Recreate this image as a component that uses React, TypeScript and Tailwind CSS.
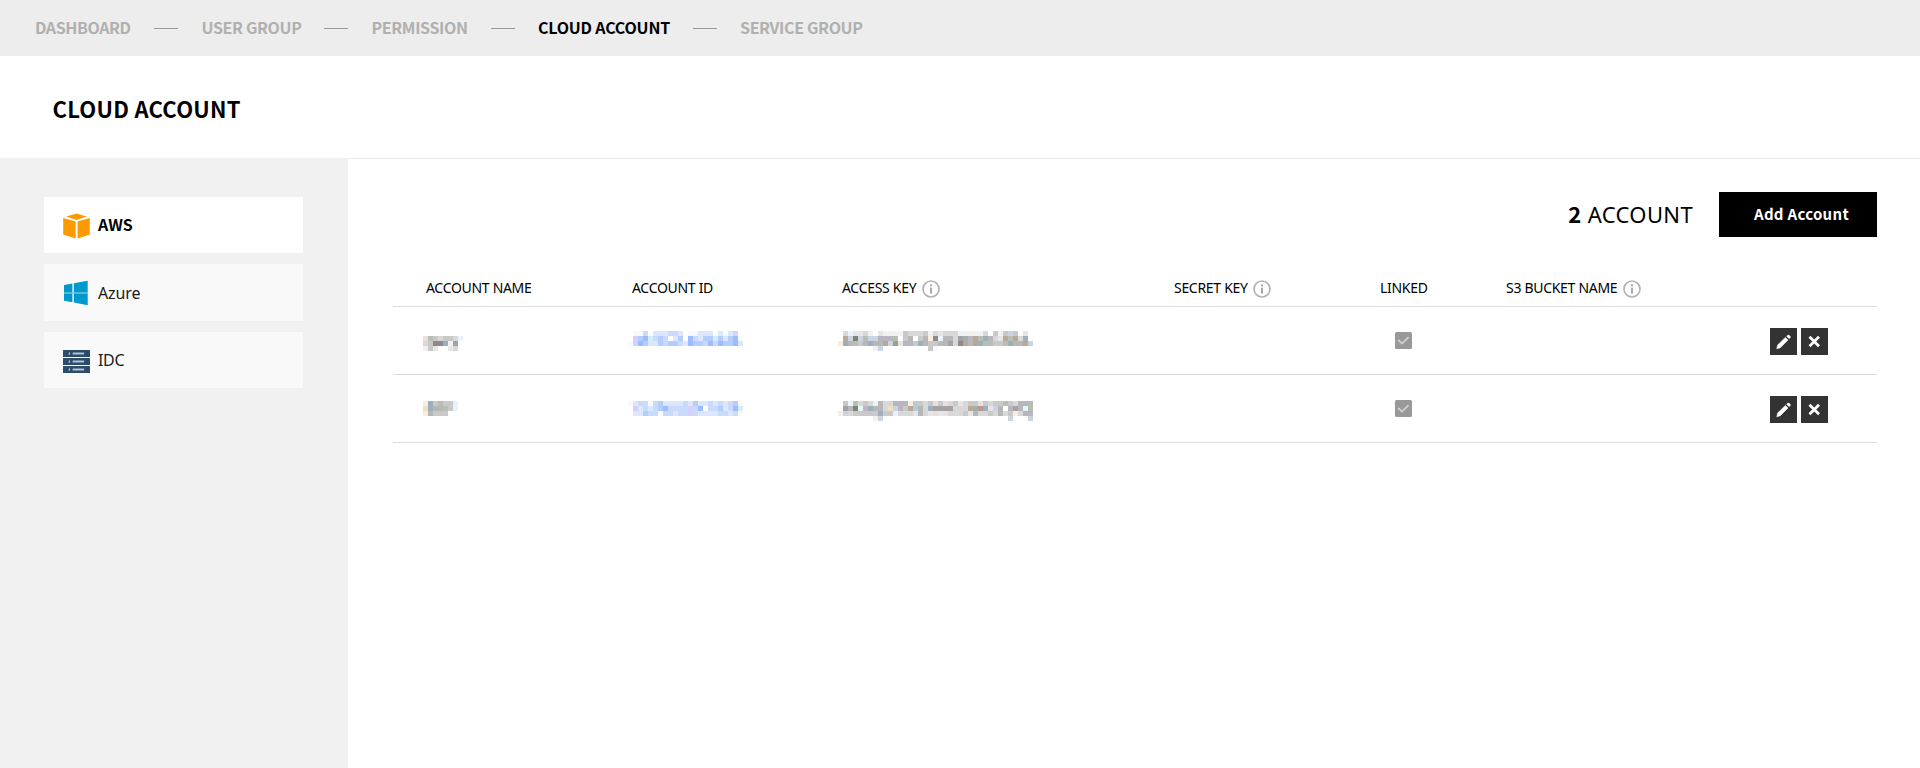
import React from "react";

const CJK = "font-['Noto_Sans_CJK_KR','Noto_Sans',sans-serif]";

const PALETTE: Record<string, string> = {
  p: "#f3f1f0", a: "#e6e6e6", k: "#d8d8d9", b: "#c9c9c9", c: "#b7b7ba", d: "#a3a1a4", e: "#8f8789",
  f: "#7f836f", g: "#b8a896", h: "#9fafba", i: "#e8f4fa", j: "#f8eddf", l: "#b6beb6", m: "#bab5c6",
  n: "#cbd5e2", o: "#ecdedb", q: "#efdfc6", r: "#b59a92", s: "#b4ccd3", t: "#9ca08e",
  "1": "#f8f8ff", "2": "#dce6fe", "3": "#c9dafd", "4": "#b3cdfd", "5": "#9cbdfd", "6": "#d6eafe", "7": "#d3d1fb",
};

function Mosaic({ rows }: { rows: string[] }) {
  const width = Math.max(...rows.map((r) => r.length)) * 5;
  const height = rows.length * 5;
  return (
    <svg width={width} height={height} viewBox={`0 0 ${width} ${height}`} shapeRendering="crispEdges" className="block">
      {rows.flatMap((row, y) =>
        row.split("").map((cell, x) =>
          PALETTE[cell] ? <rect key={`${x}-${y}`} x={x * 5} y={y * 5} width="5" height="5" fill={PALETTE[cell]} /> : null,
        ),
      )}
    </svg>
  );
}

const ACCOUNTS = [
  {
    top: "pt-6",
    name: ["........", "olbkbbki", "kbeehpd.", "pba..ak."],
    id: [".113.222332.11222.2123.", ".7456343.24.53244642451", "17546643443254435354456"],
    key: [
      ".kiaakp.aipppbkkkbpkakkkipppik.bpbnb.a.",
      ".gnfnlnncmcl.bc.bcjeicckdhcglhckaglgkh.",
      "jhclbchccgntamcbhcbblcdkegcghllbblhccgn",
      ".......pn.........b1...................",
    ],
  },
  {
    top: "pt-[26px]",
    name: ["jhblbbi", "qhcclbi", "jcbbb.."],
    id: ["12331342222324223232341", ".72363453333735.3342356", ".2243313323373222233231"],
    key: [
      ".bilkbkickkcmcjsbkbobokbakbbobkbblbkccl",
      ".dcfimhcckqnmbgsckhddddkkkghrhanc.cdcil",
      "jnkbbbbbhbbikkkackaoaakkkbackkbkckbjkcm",
      ".......pn.........................n...n",
    ],
  },
];

function Info() {
  return (
    <svg width="18" height="18" viewBox="0 0 18 18" className="mt-[3px] shrink-0">
      <circle cx="9" cy="9" r="8" fill="none" stroke="#b3b3b3" strokeWidth="1.7" />
      <rect x="8" y="7.6" width="2" height="6" fill="#a8a8a8" />
      <rect x="8" y="4.3" width="2" height="2" fill="#a8a8a8" />
    </svg>
  );
}

function AwsIcon() {
  return (
    <svg width="27" height="27" viewBox="0 0 27 27" className="mt-0.5">
      <g fill="#ff9900">
        <path d="M13.5 0.4 23.8 3.6 13.5 7 3.2 3.6Z" />
        <path d="M0.2 5 12.6 8.4V25.4L0.2 21.4Z" />
        <path d="M26.8 5 14.6 8.4V25.4L26.8 21.4Z" />
      </g>
    </svg>
  );
}

function AzureIcon() {
  return (
    <svg width="27" height="27" viewBox="0 0 27 27" className="mt-0.5">
      <rect x="1" y="12" width="23.7" height="2" fill="#a5d8eb" />
      <g fill="#0099cc">
        <path d="M1 5 9.4 3.6V12.4H1Z" />
        <path d="M10.8 3.3 24.7 0.8V12.4H10.8Z" />
        <path d="M1 13.6H9.4V22.3L1 20.8Z" />
        <path d="M10.8 13.6H24.7V25.2L10.8 22.6Z" />
      </g>
    </svg>
  );
}

function IdcIcon() {
  return (
    <svg width="27" height="27" viewBox="0 0 27 27" className="mt-1">
      {[1, 9, 17].map((y) => (
        <g key={y}>
          <rect x="0" y={y} width="27" height="7" rx="0.5" fill="#2d4b6b" />
          <rect x="5.8" y={y + 2.4} width="1.2" height="2.4" fill="#b8c2cc" />
          <rect x="9.6" y={y + 2.6} width="11.6" height="2" rx="0.6" fill="#b8c2cc" />
        </g>
      ))}
    </svg>
  );
}

function Check() {
  return (
    <svg width="17" height="17" viewBox="0 0 17 17">
      <rect width="17" height="17" rx="1.5" fill="#999" />
      <path d="M3.2 7.8 7 11.6 13.6 5.2" fill="none" stroke="#d2d2d2" strokeWidth="1.8" />
    </svg>
  );
}

function Pencil() {
  return (
    <svg width="27" height="27" viewBox="0 0 27 27" className="block bg-[#333]">
      <path d="M6.8 20.8 7.7 17 15.3 9.4 18 12 10.3 19.7Z" fill="#fff" stroke="#fff" strokeWidth="0.6" strokeLinejoin="round" />
      <path d="M16.3 8.2 17.7 6.9Q18.4 6.4 19.1 7L20.4 8.3Q21 9 20.4 9.7L19.1 11Z" fill="#fff" />
    </svg>
  );
}

function Cross() {
  return (
    <svg width="27" height="27" viewBox="0 0 27 27" className="block bg-[#333]">
      <path d="M8.5 8.8 18 18.3M18 8.8 8.5 18.3" stroke="#fff" strokeWidth="2.8" />
    </svg>
  );
}

const NAV = [
  { label: "DASHBOARD", width: "w-[119px] tracking-[-0.4px]", gap: "mr-[23.5px]" },
  { label: "USER GROUP", width: "w-[122.5px] tracking-[-0.35px]", gap: "mr-[23.5px]" },
  { label: "PERMISSION", width: "w-[119.5px] tracking-[-0.35px]", gap: "mr-[23px]" },
  { label: "CLOUD ACCOUNT", width: "w-[155px] tracking-[-0.2px]", gap: "mr-[23px]", active: true },
  { label: "SERVICE GROUP", width: "w-[130px] tracking-[-0.35px]", gap: "" },
];

const GRID = "grid grid-cols-[206px_210px_332px_206px_126px_264px_1fr] pl-[33px]";

export default function App() {
  return (
    <div className="flex h-[768px] w-[1920px] flex-col overflow-hidden bg-white font-['Noto_Sans',sans-serif] text-black">
      <nav className={`flex h-14 shrink-0 items-center bg-[#ededed] pl-[35px] text-[16px] font-bold ${CJK}`}>
        {NAV.map((n, i) => (
          <React.Fragment key={n.label}>
            <span className={`${n.width} shrink-0 whitespace-nowrap pb-0.5 leading-[54px] ${n.active ? "text-black" : "text-[#b0b0b0]"}`}>{n.label}</span>
            {i < NAV.length - 1 && <span className={`h-px w-6 shrink-0 bg-[#999] ${n.gap}`} />}
          </React.Fragment>
        ))}
      </nav>
      <header className="h-[102px] shrink-0 pl-[52.5px]">
        <h1 className={`text-[22px] font-bold leading-[105px] tracking-[0.25px] ${CJK}`}>CLOUD ACCOUNT</h1>
      </header>
      <div className="flex flex-1">
        <aside className="flex w-[348px] shrink-0 flex-col gap-[11px] bg-[#f1f1f1] pl-11 pt-[39px] text-[16px]">
          <div className={`flex h-14 w-[259px] items-center gap-2 bg-white pl-[19px] font-bold ${CJK}`}>
            <AwsIcon />
            <span className="pb-0.5">AWS</span>
          </div>
          <div className="flex h-[57px] w-[259px] items-center gap-2 bg-[#f9f9f9] pl-[19px]">
            <AzureIcon />
            <span className="tracking-[-0.1px] text-[#1a1a1a]">Azure</span>
          </div>
          <div className="flex h-14 w-[259px] items-center gap-2 bg-[#f9f9f9] pl-[19px]">
            <IdcIcon />
            <span className="tracking-[-0.3px] text-[#1a1a1a]">IDC</span>
          </div>
        </aside>
        <main className="flex-1 border-t border-[#ebebeb] pl-[45px] pr-[43px] pt-[33px]">
          <div className="flex h-[45px] items-center justify-end gap-[26px]">
            <p className="pb-px text-[22px] tracking-[0.35px]">
              <b className={`font-bold ${CJK}`}>2</b> ACCOUNT
            </p>
            <button className={`h-[45px] w-[158px] bg-black pl-[7px] text-[15px] font-bold tracking-[0.3px] text-white ${CJK}`}>Add Account</button>
          </div>
          <div className={`${GRID} mt-[33px] h-[37px] items-center border-b border-[#dbdbdb] pb-0.5 text-[14px] tracking-[-0.3px]`}>
            <span>ACCOUNT NAME</span>
            <span>ACCOUNT ID</span>
            <span className="flex items-center gap-[6px]">ACCESS KEY <Info /></span>
            <span className="flex items-center gap-[5px]">SECRET KEY <Info /></span>
            <span>LINKED</span>
            <span className="flex items-center gap-[6px]">S3 BUCKET NAME <Info /></span>
          </div>
          {ACCOUNTS.map((a, i) => (
            <div key={i} className={`${GRID} h-[68px] border-b border-[#dbdbdb]`}>
              <div className={`-ml-[3px] ${a.top}`}><Mosaic rows={a.name} /></div>
              <div className={`-ml-1 ${a.top}`}><Mosaic rows={a.id} /></div>
              <div className={`-ml-1 ${a.top}`}><Mosaic rows={a.key} /></div>
              <div />
              <div className="pl-[15px] pt-[25px]"><Check /></div>
              <div />
              <div className="flex gap-1 pt-[21px]">
                <button className="h-[27px] w-[27px]"><Pencil /></button>
                <button className="h-[27px] w-[27px]"><Cross /></button>
              </div>
            </div>
          ))}
        </main>
      </div>
    </div>
  );
}
